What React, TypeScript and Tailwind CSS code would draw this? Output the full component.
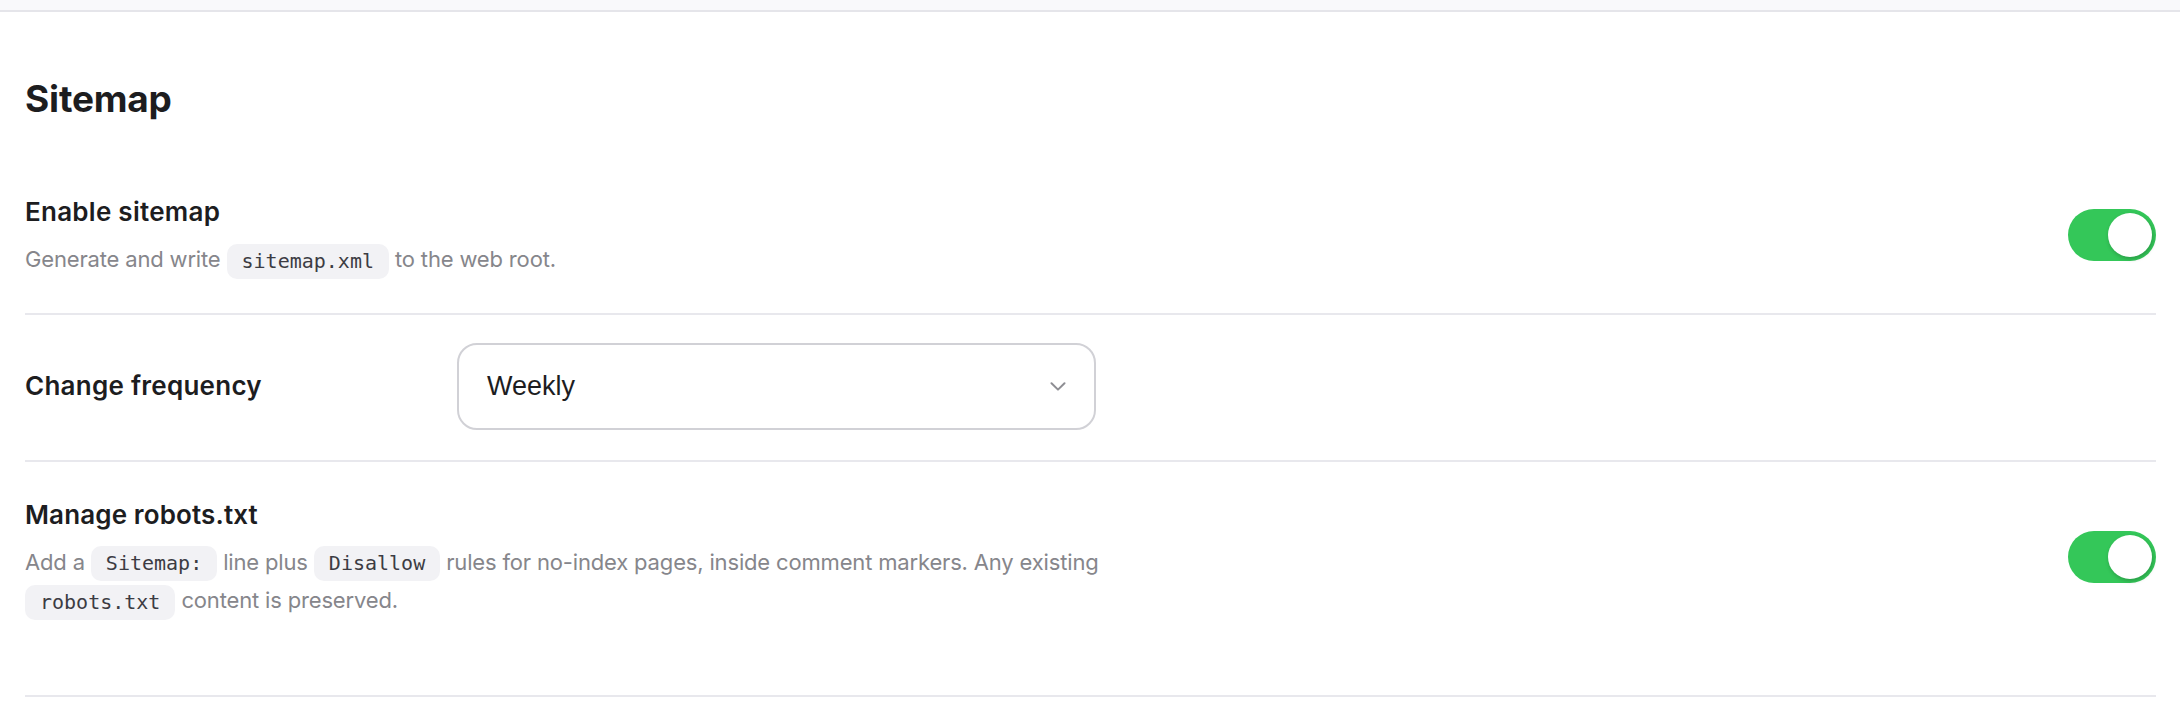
import { useState } from "react";

// iOS-style switch used by the boolean settings
const Toggle = ({ on, onChange }: { on: boolean; onChange: () => void }) => {
  return (
    <button
      type="button"
      onClick={onChange}
      className={`mb-[6px] flex h-[52px] w-[88px] shrink-0 items-center rounded-full p-[4px] ${
        on ? "justify-end bg-[#34c759]" : "justify-start bg-[#e5e5ea]"
      }`}
    >
      <span className="h-[44px] w-[44px] rounded-full bg-white shadow-[1px_2px_4px_rgba(0,0,0,0.22)]" />
    </button>
  );
};

const Code = ({ children }: { children: string }) => (
  <code className="inline-block rounded-[10px] bg-[#f2f2f5] px-[15px] py-[5px] align-middle font-['DejaVu_Sans_Mono',monospace] text-[20px] leading-[25px] tracking-normal text-[#3c3c43]">
    {children}
  </code>
);

const App = () => {
  const [sitemap, setSitemap] = useState(true);
  const [robots, setRobots] = useState(true);
  const frequency = "Weekly";

  return (
    <div className="min-h-screen bg-white font-['Inter',sans-serif] text-[#1d1d1f]">
      <div className="h-[12px] border-b-2 border-[#e5e5ea] bg-[#f9f9fb]" />

      <div className="pl-[25px] pr-[24px]">
        <h1 className="mb-[38px] mt-[65px] text-[37px] font-bold leading-[44px] tracking-[-0.005em]">
          Sitemap
        </h1>

        {/* Enable sitemap */}
        <div className="flex items-center justify-between border-b-2 border-[#e8e8ed] pb-[34px] pt-[38px]">
          <div>
            <p className="text-[26px] font-semibold leading-[30px] tracking-[0.01em]">
              Enable sitemap
            </p>
            <p className="mt-[13px] text-[22px] leading-[38px] tracking-[-0.0075em] text-[#86868b]">
              Generate and write <Code>sitemap.xml</Code> to the web root.
            </p>
          </div>
          <Toggle on={sitemap} onChange={() => setSitemap(!sitemap)} />
        </div>

        {/* Change frequency */}
        <div className="flex items-center border-b-2 border-[#e8e8ed] pb-[30px] pt-[28px]">
          <p className="w-[432px] shrink-0 text-[26px] font-semibold leading-[30px] tracking-[0.01em]">
            Change frequency
          </p>
          <div className="flex h-[87px] w-[639px] items-center justify-between rounded-[20px] border-2 border-[#d1d1d6] pl-[28px] pr-[28px]">
            <span className="font-['Liberation_Sans',Arial,sans-serif] text-[27px] text-[#1d1d1f]">
              {frequency}
            </span>
            <svg width="16" height="9" viewBox="0 0 16 9" fill="none">
              <path
                d="M1.5 1.2 8 7.6l6.5-6.4"
                stroke="#8e8e93"
                strokeWidth="2"
                strokeLinecap="round"
                strokeLinejoin="round"
              />
            </svg>
          </div>
        </div>

        {/* Manage robots.txt */}
        <div className="flex items-center justify-between border-b-2 border-[#e8e8ed] pb-[75px] pt-[38px]">
          <div className="max-w-[1160px]">
            <p className="text-[26px] font-semibold leading-[30px] tracking-[0.005em]">
              Manage robots.txt
            </p>
            <p className="mt-[13px] text-[22px] leading-[38px] tracking-[-0.0075em] text-[#86868b]">
              Add a <Code>Sitemap:</Code> line plus <Code>Disallow</Code> rules for no-index
              pages, inside comment markers. Any existing <Code>robots.txt</Code> content is
              preserved.
            </p>
          </div>
          <Toggle on={robots} onChange={() => setRobots(!robots)} />
        </div>
      </div>
    </div>
  );
};

export default App;
